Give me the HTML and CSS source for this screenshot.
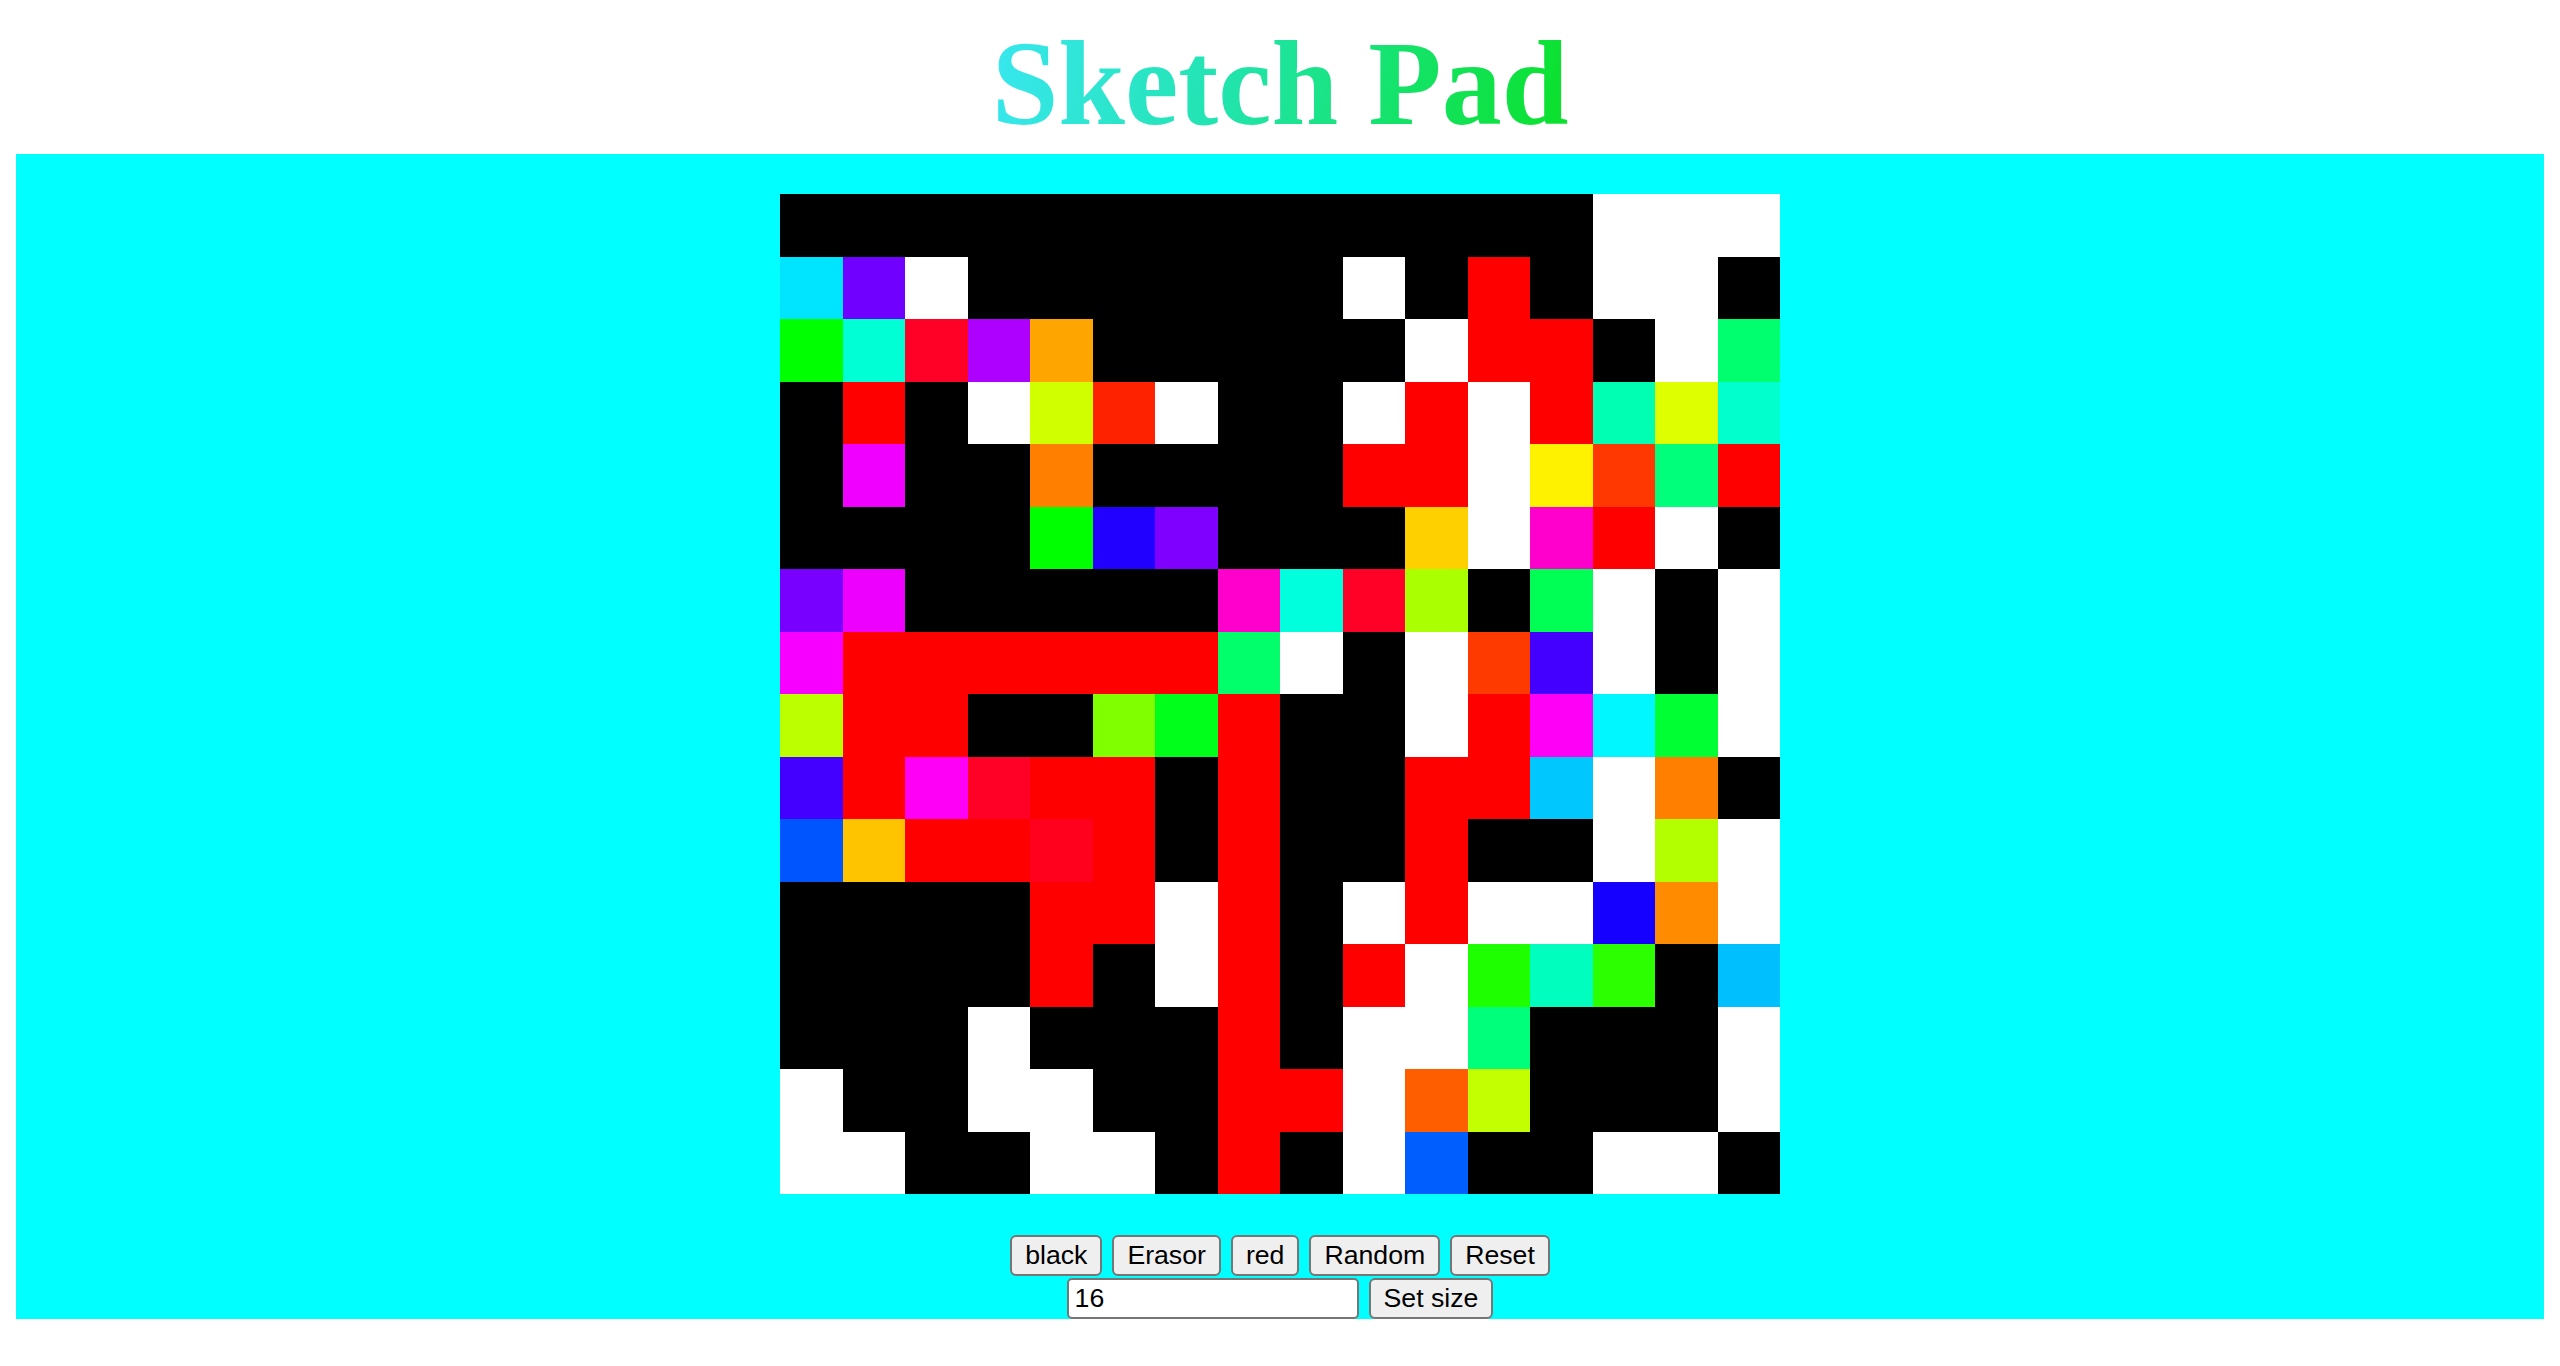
FILE: index.html
```html
<!DOCTYPE html>
<html lang="en">
<head>
<meta charset="utf-8">
<title>Sketch Pad</title>
<link rel="stylesheet" href="styles.css">
</head>
<body>
<h1 class="title"><span class="title-text">Sketch Pad</span></h1>
<main class="board">
  <div class="grid">
    <!-- row 0 -->
    <div class="k"></div><div class="k"></div><div class="k"></div><div class="k"></div><div class="k"></div><div class="k"></div><div class="k"></div><div class="k"></div>
    <div class="k"></div><div class="k"></div><div class="k"></div><div class="k"></div><div class="k"></div><div class="w"></div><div class="w"></div><div class="w"></div>
    <!-- row 1 -->
    <div style="background:#00e5ff"></div><div style="background:#7000ff"></div><div class="w"></div><div class="k"></div><div class="k"></div><div class="k"></div><div class="k"></div><div class="k"></div>
    <div class="k"></div><div class="w"></div><div class="k"></div><div class="r"></div><div class="k"></div><div class="w"></div><div class="w"></div><div class="k"></div>
    <!-- row 2 -->
    <div style="background:#00ff00"></div><div style="background:#00ffd5"></div><div style="background:#ff0026"></div><div style="background:#ae00ff"></div><div style="background:#ffa500"></div><div class="k"></div><div class="k"></div><div class="k"></div>
    <div class="k"></div><div class="k"></div><div class="w"></div><div class="r"></div><div class="r"></div><div class="k"></div><div class="w"></div><div style="background:#00ff6e"></div>
    <!-- row 3 -->
    <div class="k"></div><div class="r"></div><div class="k"></div><div class="w"></div><div style="background:#d0ff00"></div><div style="background:#ff2200"></div><div class="w"></div><div class="k"></div>
    <div class="k"></div><div class="w"></div><div class="r"></div><div class="w"></div><div class="r"></div><div style="background:#00ffb3"></div><div style="background:#ddff00"></div><div style="background:#00ffcc"></div>
    <!-- row 4 -->
    <div class="k"></div><div style="background:#f000ff"></div><div class="k"></div><div class="k"></div><div style="background:#ff8000"></div><div class="k"></div><div class="k"></div><div class="k"></div>
    <div class="k"></div><div class="r"></div><div class="r"></div><div class="w"></div><div style="background:#fff200"></div><div style="background:#ff3700"></div><div style="background:#00ff7b"></div><div class="r"></div>
    <!-- row 5 -->
    <div class="k"></div><div class="k"></div><div class="k"></div><div class="k"></div><div style="background:#00ff00"></div><div style="background:#2200ff"></div><div style="background:#8000ff"></div><div class="k"></div>
    <div class="k"></div><div class="k"></div><div style="background:#ffd000"></div><div class="w"></div><div style="background:#ff00cc"></div><div class="r"></div><div class="w"></div><div class="k"></div>
    <!-- row 6 -->
    <div style="background:#7700ff"></div><div style="background:#ee00ff"></div><div class="k"></div><div class="k"></div><div class="k"></div><div class="k"></div><div class="k"></div><div style="background:#ff00cc"></div>
    <div style="background:#00ffdd"></div><div style="background:#ff0026"></div><div style="background:#aaff00"></div><div class="k"></div><div style="background:#00ff55"></div><div class="w"></div><div class="k"></div><div class="w"></div>
    <!-- row 7 -->
    <div style="background:#f700ff"></div><div class="r"></div><div class="r"></div><div class="r"></div><div class="r"></div><div class="r"></div><div class="r"></div><div style="background:#00ff6a"></div>
    <div class="w"></div><div class="k"></div><div class="w"></div><div style="background:#ff3a00"></div><div style="background:#4400ff"></div><div class="w"></div><div class="k"></div><div class="w"></div>
    <!-- row 8 -->
    <div style="background:#bbff00"></div><div class="r"></div><div class="r"></div><div class="k"></div><div class="k"></div><div style="background:#80ff00"></div><div style="background:#00ff1a"></div><div class="r"></div>
    <div class="k"></div><div class="k"></div><div class="w"></div><div class="r"></div><div style="background:#ff00f7"></div><div style="background:#00f7ff"></div><div style="background:#00ff33"></div><div class="w"></div>
    <!-- row 9 -->
    <div style="background:#4400ff"></div><div class="r"></div><div style="background:#ff00f7"></div><div style="background:#ff0026"></div><div class="r"></div><div class="r"></div><div class="k"></div><div class="r"></div>
    <div class="k"></div><div class="k"></div><div class="r"></div><div class="r"></div><div style="background:#00c8ff"></div><div class="w"></div><div style="background:#ff8000"></div><div class="k"></div>
    <!-- row 10 -->
    <div style="background:#0055ff"></div><div style="background:#ffc400"></div><div class="r"></div><div class="r"></div><div style="background:#ff001d"></div><div class="r"></div><div class="k"></div><div class="r"></div>
    <div class="k"></div><div class="k"></div><div class="r"></div><div class="k"></div><div class="k"></div><div class="w"></div><div style="background:#b3ff00"></div><div class="w"></div>
    <!-- row 11 -->
    <div class="k"></div><div class="k"></div><div class="k"></div><div class="k"></div><div class="r"></div><div class="r"></div><div class="w"></div><div class="r"></div>
    <div class="k"></div><div class="w"></div><div class="r"></div><div class="w"></div><div class="w"></div><div style="background:#1500ff"></div><div style="background:#ff8c00"></div><div class="w"></div>
    <!-- row 12 -->
    <div class="k"></div><div class="k"></div><div class="k"></div><div class="k"></div><div class="r"></div><div class="k"></div><div class="w"></div><div class="r"></div>
    <div class="k"></div><div class="r"></div><div class="w"></div><div style="background:#1eff00"></div><div style="background:#00ffbf"></div><div style="background:#2bff00"></div><div class="k"></div><div style="background:#00bfff"></div>
    <!-- row 13 -->
    <div class="k"></div><div class="k"></div><div class="k"></div><div class="w"></div><div class="k"></div><div class="k"></div><div class="k"></div><div class="r"></div>
    <div class="k"></div><div class="w"></div><div class="w"></div><div style="background:#00ff7b"></div><div class="k"></div><div class="k"></div><div class="k"></div><div class="w"></div>
    <!-- row 14 -->
    <div class="w"></div><div class="k"></div><div class="k"></div><div class="w"></div><div class="w"></div><div class="k"></div><div class="k"></div><div class="r"></div>
    <div class="r"></div><div class="w"></div><div style="background:#ff5e00"></div><div style="background:#c3ff00"></div><div class="k"></div><div class="k"></div><div class="k"></div><div class="w"></div>
    <!-- row 15 -->
    <div class="w"></div><div class="w"></div><div class="k"></div><div class="k"></div><div class="w"></div><div class="w"></div><div class="k"></div><div class="r"></div>
    <div class="k"></div><div class="w"></div><div style="background:#005eff"></div><div class="k"></div><div class="k"></div><div class="w"></div><div class="w"></div><div class="k"></div>
  </div>
  <div class="controls">
    <button class="btn" type="button">black</button>
    <button class="btn" type="button">Erasor</button>
    <button class="btn" type="button">red</button>
    <button class="btn" type="button">Random</button>
    <button class="btn" type="button">Reset</button>
  </div>
  <div class="controls size-row">
    <input class="size-input" type="text" value="16">
    <button class="btn" type="button">Set size</button>
  </div>
</main>
</body>
</html>
```

FILE: styles.css
```css
html, body {
  margin: 0;
  padding: 0;
  background: #ffffff;
}

body {
  padding: 0 16px;
  font-family: "Liberation Serif", "Times New Roman", serif;
}

.title {
  margin: 0 0 10px 0;
  padding-top: 24px;
  text-align: center;
  font-size: 120px;
  line-height: 120px;
  font-weight: bold;
}

.title-text {
  display: inline-block;
  background: linear-gradient(100deg, #38e7f0 0%, #22e4b0 40%, #14e36a 70%, #0be12a 100%);
  -webkit-background-clip: text;
  background-clip: text;
  color: transparent;
  -webkit-text-fill-color: transparent;
}

.board {
  background: #00ffff;
  padding-top: 40px;
  display: flex;
  flex-direction: column;
  align-items: center;
}

.grid {
  width: 1000px;
  height: 1000px;
  display: grid;
  grid-template-columns: repeat(16, 1fr);
  grid-template-rows: repeat(16, 1fr);
  margin-bottom: 41px;
}

.k { background: #000000; }
.w { background: #ffffff; }
.r { background: #ff0000; }

.controls {
  display: flex;
  gap: 10px;
  justify-content: center;
  align-items: center;
}

.size-row {
  margin-top: 2px;
}

.btn {
  height: 41px;
  margin: 0;
  padding: 0 13px;
  font-family: "Liberation Sans", Arial, sans-serif;
  font-size: 26.67px;
  color: #000000;
  background: #efefef;
  border: 2px solid #767676;
  border-radius: 6px;
}

.size-input {
  box-sizing: border-box;
  width: 292px;
  height: 41px;
  margin: 0;
  padding: 0 6px;
  font-family: "Liberation Sans", Arial, sans-serif;
  font-size: 26.67px;
  color: #000000;
  background: #ffffff;
  border: 2px solid #767676;
  border-radius: 5px;
}
```
